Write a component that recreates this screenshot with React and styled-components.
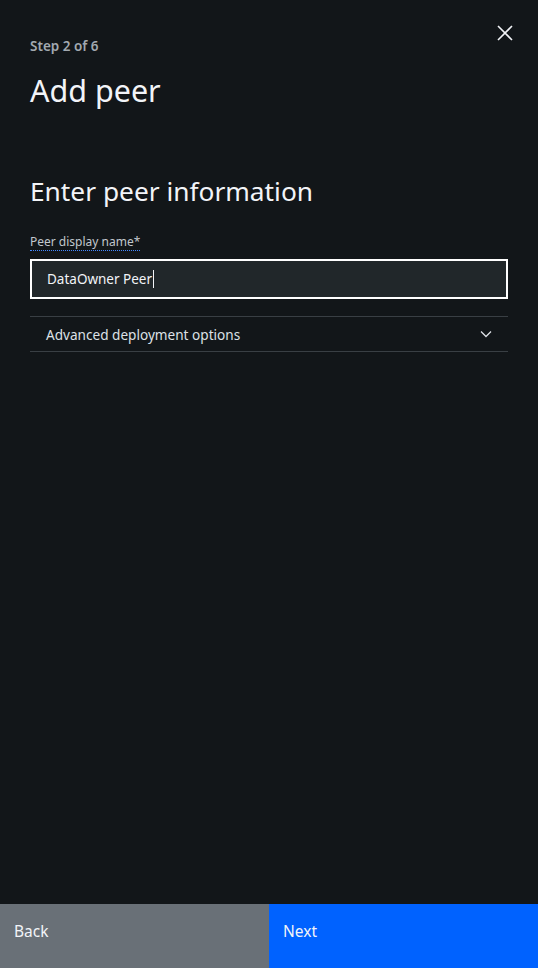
import styled, { createGlobalStyle } from 'styled-components';

const GlobalStyle = createGlobalStyle`
    html, body {
        margin: 0;
        padding: 0;
        background-color: #121619;
    }
    * {
        box-sizing: border-box;
    }
`

const Panel = styled.div`
    display: flex;
    flex-direction: column;
    width: 100%;
    height: 100vh;
    background-color: #121619;
    font-family: "Noto Sans", "Open Sans", sans-serif;
    color: #f2f4f8;
`

const Content = styled.div`
    position: relative;
    flex: 1;
    padding: 36px 30px 0;
`

const CloseButton = styled.button`
    position: absolute;
    top: 22px;
    right: 22px;
    width: 22px;
    height: 22px;
    padding: 0;
    border: none;
    background: none;
    cursor: pointer;
    display: flex;
    align-items: center;
    justify-content: center;
`

const StepLabel = styled.p`
    margin: 0;
    font-size: 13.5px;
    font-weight: 600;
    line-height: 20px;
    color: #a2a9b0;
`

const Title = styled.h1`
    margin: 14px 0 0;
    font-size: 30.5px;
    font-weight: 400;
    line-height: 40px;
    color: #f2f4f8;
`

const SectionTitle = styled.h2`
    margin: 61px 0 0;
    font-size: 26.3px;
    font-weight: 400;
    line-height: 40px;
    color: #f2f4f8;
`

const FieldLabel = styled.label`
    display: inline-block;
    margin: 23px 0 0;
    font-size: 12px;
    line-height: 16px;
    color: #c1c7cd;
    border-bottom: 1px dotted #4589ff;
`

const Input = styled.div`
    display: flex;
    align-items: center;
    margin: 8px 0 0;
    height: 40px;
    padding: 0 15px;
    background-color: #21272a;
    border: 2px solid #ffffff;
    font-size: 13.5px;
    color: #f2f4f8;
`

const Caret = styled.span`
    display: inline-block;
    width: 1px;
    height: 18px;
    margin-left: 1px;
    background-color: #f2f4f8;
`

const Accordion = styled.div`
    display: flex;
    align-items: center;
    justify-content: space-between;
    margin: 17px 0 0;
    height: 36px;
    padding: 0 16px;
    border-top: 1px solid #393f44;
    border-bottom: 1px solid #393f44;
    font-size: 13.6px;
    color: #dde1e6;
`

const Footer = styled.div`
    display: grid;
    grid-template-columns: 1fr 1fr;
    height: 64px;
`

const FooterButton = styled.button`
    display: flex;
    align-items: flex-start;
    padding: 17px 14px 0;
    border: none;
    background-color: ${props => props.primary ? '#0062ff' : '#697077'};
    font-family: "Noto Sans", "Open Sans", sans-serif;
    font-size: 15.5px;
    line-height: 20px;
    color: #f2f4f8;
    text-align: left;
    cursor: pointer;
`

function App() {
    return (
        <>
            <GlobalStyle />
            <Panel>
                <Content>
                    <CloseButton aria-label="Close">
                        <svg width="18" height="18" viewBox="0 0 18 18" fill="none" stroke="#f2f4f8" strokeWidth="1.6">
                            <path d="M2 2 L16 16 M16 2 L2 16" />
                        </svg>
                    </CloseButton>
                    <StepLabel>Step 2 of 6</StepLabel>
                    <Title>Add peer</Title>
                    <SectionTitle>Enter peer information</SectionTitle>
                    <FieldLabel>Peer display name*</FieldLabel>
                    <Input>DataOwner Peer<Caret /></Input>
                    <Accordion>
                        <span>Advanced deployment options</span>
                        <svg width="12" height="8" viewBox="0 0 12 8" fill="none" stroke="#dde1e6" strokeWidth="1.3">
                            <path d="M1 1.5 L6 6.5 L11 1.5" />
                        </svg>
                    </Accordion>
                </Content>
                <Footer>
                    <FooterButton>Back</FooterButton>
                    <FooterButton primary>Next</FooterButton>
                </Footer>
            </Panel>
        </>
    )
}

export default App;
